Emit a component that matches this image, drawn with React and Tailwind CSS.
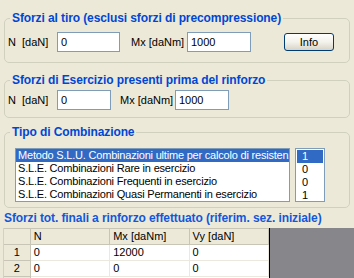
import React from "react";

const combinazioni = [
  { nome: "Metodo S.L.U. Combinazioni ultime per calcolo di resistenza", val: "1" },
  { nome: "S.L.E. Combinazioni Rare in esercizio", val: "0" },
  { nome: "S.L.E. Combinazioni Frequenti in esercizio", val: "0" },
  { nome: "S.L.E. Combinazioni Quasi Permanenti in esercizio", val: "1" },
];

const righe = [
  { n: "0", mx: "12000", vy: "0" },
  { n: "0", mx: "0", vy: "0" },
];

function Campo({ value, w }) {
  return (
    <div
      className={`${w} h-[20px] bg-white border border-[#7f9db9] pl-[3px] flex items-center text-[11px] text-black`}
    >
      {value}
    </div>
  );
}

function Gruppo({ titolo, h, className = "", children }) {
  return (
    <fieldset
      className={`mx-[4px] ${h} border border-[#d0d0bf] rounded-[5px] pl-[3px] pr-[3px] ${className}`}
    >
      <legend className="ml-[2px] px-[2px] h-[14px] leading-[14px] text-[12px] font-bold tracking-[-0.1px] text-[#0046d5]">
        {titolo}
      </legend>
      {children}
    </fieldset>
  );
}

export default function App() {
  return (
    <div className="w-[354px] h-[278px] overflow-hidden bg-[#ece9d8] font-['Liberation_Sans',Arial,sans-serif] text-[11px] text-black">
      {/* gruppo 1 */}
      <Gruppo titolo="Sforzi al tiro (esclusi sforzi di precompressione)" h="h-[52px]" className="mt-[11px]">
        <div className="flex items-center pt-[7px]">
          <span className="w-[49px] whitespace-pre">N  [daN]</span>
          <Campo value="0" w="w-[63px]" />
          <span className="ml-[11px] w-[56px]">Mx [daNm]</span>
          <Campo value="1000" w="w-[64px]" />
          <button className="ml-[33px] w-[50px] h-[18px] rounded-[3px] border border-[#003c74] bg-gradient-to-b from-white via-[#f3f2ec] to-[#d8d3c6] text-[11px] leading-none">
            Info
          </button>
        </div>
      </Gruppo>

      {/* gruppo 2 */}
      <Gruppo titolo="Sforzi di Esercizio presenti prima del rinforzo" h="h-[45px]" className="mt-[10px]">
        <div className="flex items-center pt-[3px]">
          <span className="w-[49px] whitespace-pre">N  [daN]</span>
          <Campo value="0" w="w-[54px]" />
          <span className="ml-[9px] w-[55px]">Mx [daNm]</span>
          <Campo value="1000" w="w-[54px]" />
        </div>
      </Gruppo>

      {/* gruppo 3 */}
      <Gruppo titolo="Tipo di Combinazione" h="h-[83px]" className="mt-[7px]">
        <div className="flex pt-[9px] ml-[7px]">
          <div className="w-[275px] h-[54px] bg-white border border-[#7f9db9] overflow-hidden">
            {combinazioni.map((c, i) => (
              <div
                key={i}
                className={`h-[13px] leading-[13px] pl-[2px] whitespace-nowrap overflow-hidden tracking-[-0.2px] ${
                  i === 0 ? "bg-[#316ac5] text-white" : ""
                }`}
              >
                {c.nome}
              </div>
            ))}
          </div>
          <div className="ml-[5px] w-[30px] h-[54px] bg-white border border-[#7f9db9] p-[1px]">
            {combinazioni.map((c, i) => (
              <div
                key={i}
                className={`h-[13px] leading-[13px] pl-[5px] ${i === 0 ? "bg-[#316ac5] text-white" : ""}`}
              >
                {c.val}
              </div>
            ))}
          </div>
        </div>
      </Gruppo>

      {/* risultati */}
      <div className="mt-[3px] ml-[4px] h-[14px] leading-[14px] text-[12px] font-bold tracking-[-0.1px] text-[#1257dc]">
        Sforzi tot. finali a rinforzo effettuato (riferim. sez. iniziale)
      </div>

      <div className="mt-[3px] flex">
        <div className="ml-[3px] w-[266px] border-l border-[#d4d0c8]">
          <div className="flex h-[17px] bg-[#ece9d8] border-t border-b border-[#c8c4b6]">
            <div className="w-[27px] border-r border-[#c8c4b6]" />
            {["N", "Mx [daNm]", "Vy [daN]"].map((t) => (
              <div key={t} className="w-[80px] pl-[3px] leading-[15px] border-r border-[#c8c4b6]">
                {t}
              </div>
            ))}
          </div>
          {righe.map((r, i) => (
            <div key={i} className="flex h-[16px]">
              <div className="w-[27px] bg-[#ece9d8] border-r border-b border-[#c8c4b6] text-center leading-[15px]">
                {i + 1}
              </div>
              {[r.n, r.mx, r.vy].map((v, j) => (
                <div
                  key={j}
                  className="w-[80px] bg-white pl-[3px] leading-[15px] border-r border-b border-[#ebe9dd]"
                >
                  {v}
                </div>
              ))}
            </div>
          ))}
          <div className="flex h-[16px]">
            <div className="w-[27px] bg-[#ece9d8] border-r border-[#c8c4b6]" />
            <div className="w-[240px] bg-white" />
          </div>
        </div>
        <div className="w-[1px] bg-black" />
        <div className="flex-1 h-[60px] bg-[#87868a]" />
      </div>
    </div>
  );
}
